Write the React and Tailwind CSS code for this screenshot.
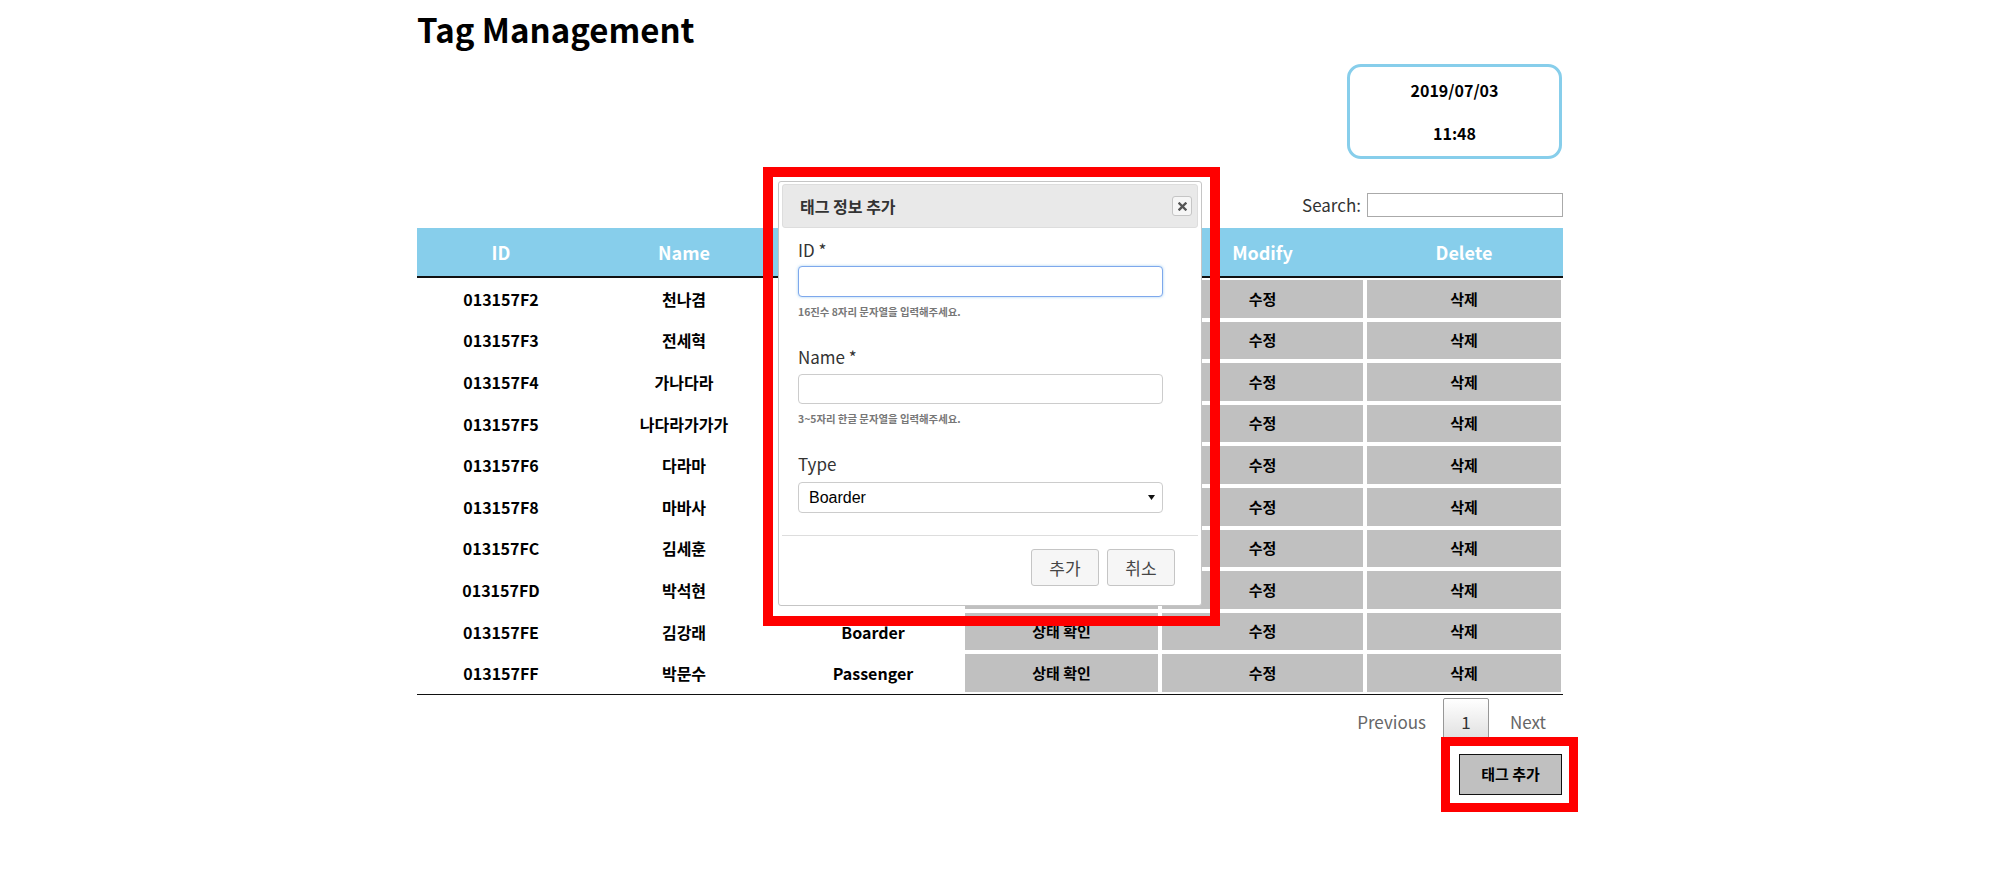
import React from 'react'

const rows = [
  { id: '013157F2', name: '천나겸', type: 'Boarder' },
  { id: '013157F3', name: '전세혁', type: 'Passenger' },
  { id: '013157F4', name: '가나다라', type: 'Boarder' },
  { id: '013157F5', name: '나다라가가가', type: 'Passenger' },
  { id: '013157F6', name: '다라마', type: 'Boarder' },
  { id: '013157F8', name: '마바사', type: 'Passenger' },
  { id: '013157FC', name: '김세훈', type: 'Boarder' },
  { id: '013157FD', name: '박석현', type: 'Passenger' },
  { id: '013157FE', name: '김강래', type: 'Boarder' },
  { id: '013157FF', name: '박문수', type: 'Passenger' }
]

const cols = 'grid grid-cols-[168px_198px_180px_197px_205px_198px]'

function GrayButton({ children }) {
  return (
    <div className="h-full px-[2px]">
      <div className="h-full bg-[#c0c0c0] flex items-center justify-center text-[15px] font-bold text-black">
        {children}
      </div>
    </div>
  )
}

function TagDialog() {
  return (
    <div className="absolute left-[778px] top-[181px] w-[424px] h-[425px] bg-white border border-[#c5c5c5] rounded-[3px] p-[3px] pt-[2px] flex flex-col">
      <div className="h-[44px] bg-[#e9e9e9] border border-[#dddddd] rounded-[3px] flex items-center justify-between pl-[17px] pr-[5px]">
        <span className="text-[16px] font-bold text-[#333]">태그 정보 추가</span>
        <button className="w-[20px] h-[20px] bg-[#f6f6f6] border border-[#c5c5c5] rounded-[3px] flex items-center justify-center">
          <svg width="9" height="9" viewBox="0 0 9 9">
            <path d="M1.5 1.5 L7.5 7.5 M7.5 1.5 L1.5 7.5" stroke="#555" strokeWidth="2.4" strokeLinecap="square" />
          </svg>
        </button>
      </div>
      <div className="flex-1 pl-[16px] pt-[10px]">
        <div className="text-[17px] leading-[24px] text-[#333]">ID *</div>
        <div className="mt-[4px] w-[365px] h-[31px] rounded-[4px] border border-[#7ea8ec] shadow-[0_0_3px_rgba(102,175,233,0.6)] bg-white" />
        <div className="mt-[8px] text-[10.4px] leading-[14px] font-bold text-[#777]">16진수 8자리 문자열을 입력해주세요.</div>
        <div className="mt-[26px] text-[17px] leading-[24px] text-[#333]">Name *</div>
        <div className="mt-[5px] w-[365px] h-[30px] rounded-[4px] border border-[#ccc] bg-white" />
        <div className="mt-[8px] text-[10.4px] leading-[14px] font-bold text-[#777]">3~5자리 한글 문자열을 입력해주세요.</div>
        <div className="mt-[26px] text-[17px] leading-[24px] text-[#333]">Type</div>
        <div className="mt-[6px] w-[365px] h-[31px] rounded-[4px] border border-[#ccc] bg-white flex items-center justify-between pl-[10px] pr-[7px]">
          <span className="font-['Liberation_Sans',sans-serif] text-[16px] text-black">Boarder</span>
          <svg width="7" height="5" viewBox="0 0 7 5">
            <path d="M0 0 L7 0 L3.5 5 Z" fill="#111" />
          </svg>
        </div>
      </div>
      <div className="h-[67px] border-t border-[#dddddd] flex items-start justify-end gap-[8px] pt-[13px] pr-[23px]">
        <button className="w-[68px] h-[37px] bg-[#f6f6f6] border border-[#c5c5c5] rounded-[3px] text-[17px] text-[#454545]">추가</button>
        <button className="w-[68px] h-[37px] bg-[#f6f6f6] border border-[#c5c5c5] rounded-[3px] text-[17px] text-[#454545]">취소</button>
      </div>
    </div>
  )
}

export default function App() {
  return (
    <div className="relative w-full h-[872px] bg-white font-['Noto_Sans_CJK_KR',sans-serif] text-[#111] overflow-hidden">
      <div className="ml-[417px] w-[1146px]">
        <h1 className="mt-[6px] h-[46px] text-[33px] leading-[46px] font-bold text-black">Tag Management</h1>

        <div className="flex justify-end mt-[12px] pr-[1px]">
          <div className="w-[215px] h-[95px] border-[3px] border-[#87ceeb] rounded-[14px] flex flex-col items-center font-bold text-[16px] text-black">
            <div className="mt-[11px] leading-[24px]">2019/07/03</div>
            <div className="mt-[19px] leading-[24px]">11:48</div>
          </div>
        </div>

        <div className="mt-[34px] h-[24px] flex justify-end items-center gap-[6px]">
          <span className="text-[17px] text-[#333]">Search:</span>
          <div className="w-[196px] h-[24px] border border-[#aaa] bg-white" />
        </div>

        <div className="mt-[11px]">
          <div className={`${cols} h-[50px] bg-[#87ceeb] border-b-2 border-[#111] text-white font-bold text-[18px]`}>
            {['ID', 'Name', 'Type', 'Status', 'Modify', 'Delete'].map((h) => (
              <div key={h} className="flex items-center justify-center">{h}</div>
            ))}
          </div>
          <div className="border-b border-[#111]">
            {rows.map((r) => (
              <div key={r.id} className={`${cols} h-[41.6px] py-[2px] text-[16px] font-bold text-black`}>
                <div className="flex items-center justify-center">{r.id}</div>
                <div className="flex items-center justify-center">{r.name}</div>
                <div className="flex items-center justify-center">{r.type}</div>
                <GrayButton>상태 확인</GrayButton>
                <GrayButton>수정</GrayButton>
                <GrayButton>삭제</GrayButton>
              </div>
            ))}
          </div>
        </div>

        <div className="mt-[3px] flex justify-end items-center h-[48px] text-[17px]">
          <span className="pl-[17px] pr-[17px] text-[#666]">Previous</span>
          <span className="w-[46px] h-[48px] flex items-center justify-center border border-[#979797] rounded-[2px] bg-gradient-to-b from-white to-[#dcdcdc] text-[#333]">1</span>
          <span className="pl-[21px] pr-[17px] text-[#666]">Next</span>
        </div>

        <div className="mt-[8px] flex justify-end pr-[1px]">
          <button className="w-[103px] h-[41px] bg-[#c0c0c0] border border-[#111] text-[15px] font-bold text-black">태그 추가</button>
        </div>
      </div>

      <TagDialog />

      <div className="absolute left-[763px] top-[167px] w-[457px] h-[459px] border-[10px] border-[#ff0000] pointer-events-none" />
      <div className="absolute left-[1441px] top-[737px] w-[137px] h-[75px] border-[9px] border-[#ff0000] pointer-events-none" />
    </div>
  )
}
